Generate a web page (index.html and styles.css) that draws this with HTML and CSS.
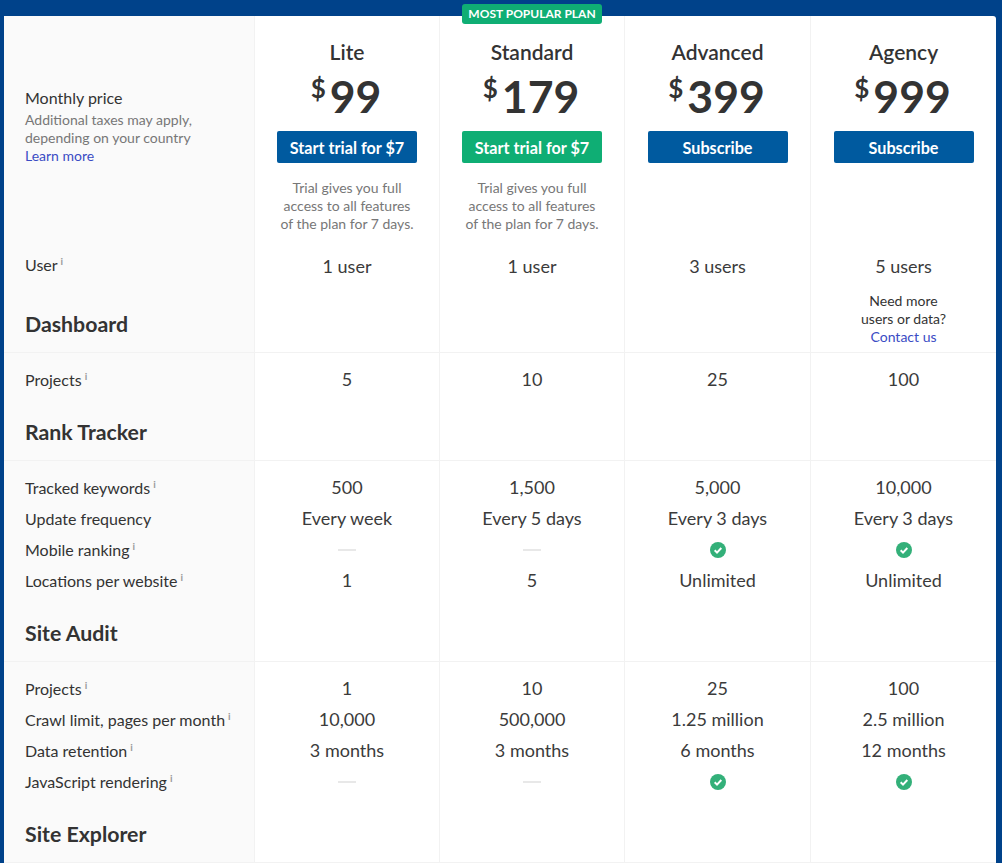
FILE: index.html
```html
<!DOCTYPE html>
<html lang="en">
<head>
<meta charset="utf-8">
<title>Pricing plans</title>
<link rel="stylesheet" href="styles.css">
</head>
<body>
<main class="card">
  <span class="badge">MOST POPULAR PLAN</span>
  <section class="section">
    <div class="row">
      <div class="cell label price-label">
        <div class="price-title">Monthly price</div>
        <div class="note">Additional taxes may apply,<br>depending on your country<br><a href="#" class="link">Learn more</a></div>
      </div>
      <div class="cell plan">
        <h3 class="plan-name">Lite</h3>
        <div class="price"><span class="currency">$</span><span class="amount">99</span></div>
        <a href="#" class="btn">Start trial for $7</a>
        <p class="trial">Trial gives you full<br>access to all features<br>of the plan for 7 days.</p>
      </div>
      <div class="cell plan">
        <h3 class="plan-name">Standard</h3>
        <div class="price"><span class="currency">$</span><span class="amount">179</span></div>
        <a href="#" class="btn btn-green">Start trial for $7</a>
        <p class="trial">Trial gives you full<br>access to all features<br>of the plan for 7 days.</p>
      </div>
      <div class="cell plan">
        <h3 class="plan-name">Advanced</h3>
        <div class="price"><span class="currency">$</span><span class="amount">399</span></div>
        <a href="#" class="btn">Subscribe</a>
      </div>
      <div class="cell plan">
        <h3 class="plan-name">Agency</h3>
        <div class="price"><span class="currency">$</span><span class="amount">999</span></div>
        <a href="#" class="btn">Subscribe</a>
      </div>
    </div>
    <div class="row row-user">
      <div class="cell label">User<sup class="info">i</sup></div>
      <div class="cell val">1 user</div>
      <div class="cell val">1 user</div>
      <div class="cell val">3 users</div>
      <div class="cell val">5 users</div>
    </div>
    <div class="row row-head row-head-tall">
      <div class="cell label"><h2 class="heading">Dashboard</h2></div>
      <div class="cell"></div>
      <div class="cell"></div>
      <div class="cell"></div>
      <div class="cell more">Need more<br>users or data?<br><a href="#" class="link">Contact us</a></div>
    </div>
  </section>

  <section class="section">
    <div class="row row-first">
      <div class="cell label">Projects<sup class="info">i</sup></div>
      <div class="cell val">5</div>
      <div class="cell val">10</div>
      <div class="cell val">25</div>
      <div class="cell val">100</div>
    </div>
    <div class="row row-head">
      <div class="cell label"><h2 class="heading">Rank Tracker</h2></div>
      <div class="cell"></div><div class="cell"></div><div class="cell"></div><div class="cell"></div>
    </div>
  </section>

  <section class="section">
    <div class="row row-first">
      <div class="cell label">Tracked keywords<sup class="info">i</sup></div>
      <div class="cell val">500</div>
      <div class="cell val">1,500</div>
      <div class="cell val">5,000</div>
      <div class="cell val">10,000</div>
    </div>
    <div class="row">
      <div class="cell label">Update frequency</div>
      <div class="cell val">Every week</div>
      <div class="cell val">Every 5 days</div>
      <div class="cell val">Every 3 days</div>
      <div class="cell val">Every 3 days</div>
    </div>
    <div class="row">
      <div class="cell label">Mobile ranking<sup class="info">i</sup></div>
      <div class="cell val"><span class="dash"></span></div>
      <div class="cell val"><span class="dash"></span></div>
      <div class="cell val"><svg class="check" viewBox="0 0 16 16"><circle cx="8" cy="8" r="8"/><path d="M4.7 8.3l2.3 2.3 4.3-4.6"/></svg></div>
      <div class="cell val"><svg class="check" viewBox="0 0 16 16"><circle cx="8" cy="8" r="8"/><path d="M4.7 8.3l2.3 2.3 4.3-4.6"/></svg></div>
    </div>
    <div class="row">
      <div class="cell label">Locations per website<sup class="info">i</sup></div>
      <div class="cell val">1</div>
      <div class="cell val">5</div>
      <div class="cell val">Unlimited</div>
      <div class="cell val">Unlimited</div>
    </div>
    <div class="row row-head">
      <div class="cell label"><h2 class="heading">Site Audit</h2></div>
      <div class="cell"></div><div class="cell"></div><div class="cell"></div><div class="cell"></div>
    </div>
  </section>

  <section class="section">
    <div class="row row-first">
      <div class="cell label">Projects<sup class="info">i</sup></div>
      <div class="cell val">1</div>
      <div class="cell val">10</div>
      <div class="cell val">25</div>
      <div class="cell val">100</div>
    </div>
    <div class="row">
      <div class="cell label">Crawl limit, pages per month<sup class="info">i</sup></div>
      <div class="cell val">10,000</div>
      <div class="cell val">500,000</div>
      <div class="cell val">1.25 million</div>
      <div class="cell val">2.5 million</div>
    </div>
    <div class="row">
      <div class="cell label">Data retention<sup class="info">i</sup></div>
      <div class="cell val">3 months</div>
      <div class="cell val">3 months</div>
      <div class="cell val">6 months</div>
      <div class="cell val">12 months</div>
    </div>
    <div class="row">
      <div class="cell label">JavaScript rendering<sup class="info">i</sup></div>
      <div class="cell val"><span class="dash"></span></div>
      <div class="cell val"><span class="dash"></span></div>
      <div class="cell val"><svg class="check" viewBox="0 0 16 16"><circle cx="8" cy="8" r="8"/><path d="M4.7 8.3l2.3 2.3 4.3-4.6"/></svg></div>
      <div class="cell val"><svg class="check" viewBox="0 0 16 16"><circle cx="8" cy="8" r="8"/><path d="M4.7 8.3l2.3 2.3 4.3-4.6"/></svg></div>
    </div>
    <div class="row row-head">
      <div class="cell label"><h2 class="heading">Site Explorer</h2></div>
      <div class="cell"></div><div class="cell"></div><div class="cell"></div><div class="cell"></div>
    </div>
  </section>
</main>
</body>
</html>
```

FILE: styles.css
```css
* {
  box-sizing: border-box;
}

html,
body {
  margin: 0;
  height: 863px;
  overflow: hidden;
  background: #00428a;
}

body {
  padding: 16px 6px 0 4px;
  font-family: Lato, "Open Sans", sans-serif;
  color: #333;
}

.card {
  position: relative;
  background: #fff;
  border-radius: 3px 3px 0 0;
}

.badge {
  position: absolute;
  top: -12px;
  left: 458px;
  width: 140px;
  height: 20px;
  border-radius: 3px;
  background: #0fae74;
  color: #fff;
  font-size: 12px;
  font-weight: 700;
  line-height: 20px;
  text-align: center;
}

.section {
  border-bottom: 1px solid #f2f2f2;
}

.row {
  display: grid;
  grid-template-columns: 250px 185px 185px 186px 186px;
}

.cell {
  border-left: 1px solid #f2f2f2;
}

.label {
  border-left: 0;
  padding-left: 21px;
  background: #fafafa;
  font-size: 16px;
  line-height: 29px;
}

.val {
  height: 31px;
  padding-bottom: 3px;
  display: flex;
  align-items: center;
  justify-content: center;
  font-size: 18px;
  color: #3b3b3b;
}

.row-user .val {
  padding-top: 1px;
  padding-bottom: 0;
}

.row-first .cell {
  height: 43px;
  padding-top: 12px;
}

.plan {
  height: 234px;
  padding-top: 20px;
  display: flex;
  flex-direction: column;
  align-items: center;
}

.price-label {
  padding-top: 70px;
}

.price-title {
  margin-bottom: 1px;
  line-height: 24px;
}

.note {
  font-size: 14px;
  line-height: 18px;
  color: #777;
}

.link {
  color: #3a4cc4;
  text-decoration: none;
}

.plan-name {
  margin: 0;
  font-size: 21px;
  font-weight: 600;
  line-height: 31px;
}

.price {
  display: flex;
  align-items: flex-start;
  height: 48px;
  margin-top: 5px;
  padding-right: 2px;
  line-height: 48px;
}

.currency {
  margin-right: 4px;
  font-size: 26px;
  font-weight: 700;
  line-height: 32px;
}

.amount {
  font-size: 44.5px;
  font-weight: 700;
}

.btn {
  display: block;
  width: 140px;
  height: 32px;
  margin-top: 11px;
  border-radius: 2px;
  background: #005a9f;
  color: #fff;
  font-size: 16.2px;
  font-weight: 700;
  line-height: 33px;
  text-align: center;
  text-decoration: none;
}

.btn-green {
  background: #0fae74;
}

.trial {
  margin: 16px 0 0;
  font-size: 14px;
  line-height: 18px;
  color: #777;
  text-align: center;
}

.row-head .cell {
  height: 64px;
}

.row-head-tall .cell {
  height: 71px;
}

.row-head .label {
  display: flex;
  align-items: flex-end;
  padding-bottom: 14px;
}

.heading {
  margin: 0;
  font-size: 21.3px;
  font-weight: 700;
  line-height: 28px;
}

.more {
  padding-top: 11px;
  font-size: 14px;
  line-height: 18px;
  text-align: center;
}

.info {
  margin-left: 3px;
  font-size: 10px;
  font-weight: 700;
  line-height: 0;
  color: #999;
}

.dash {
  width: 18px;
  height: 2px;
  margin-top: 2px;
  background: #e8e8e8;
}

.check {
  width: 16px;
  height: 16px;
  margin-top: 2px;
}

.check circle {
  fill: #33b079;
}

.check path {
  fill: none;
  stroke: #fff;
  stroke-width: 2;
}
```
